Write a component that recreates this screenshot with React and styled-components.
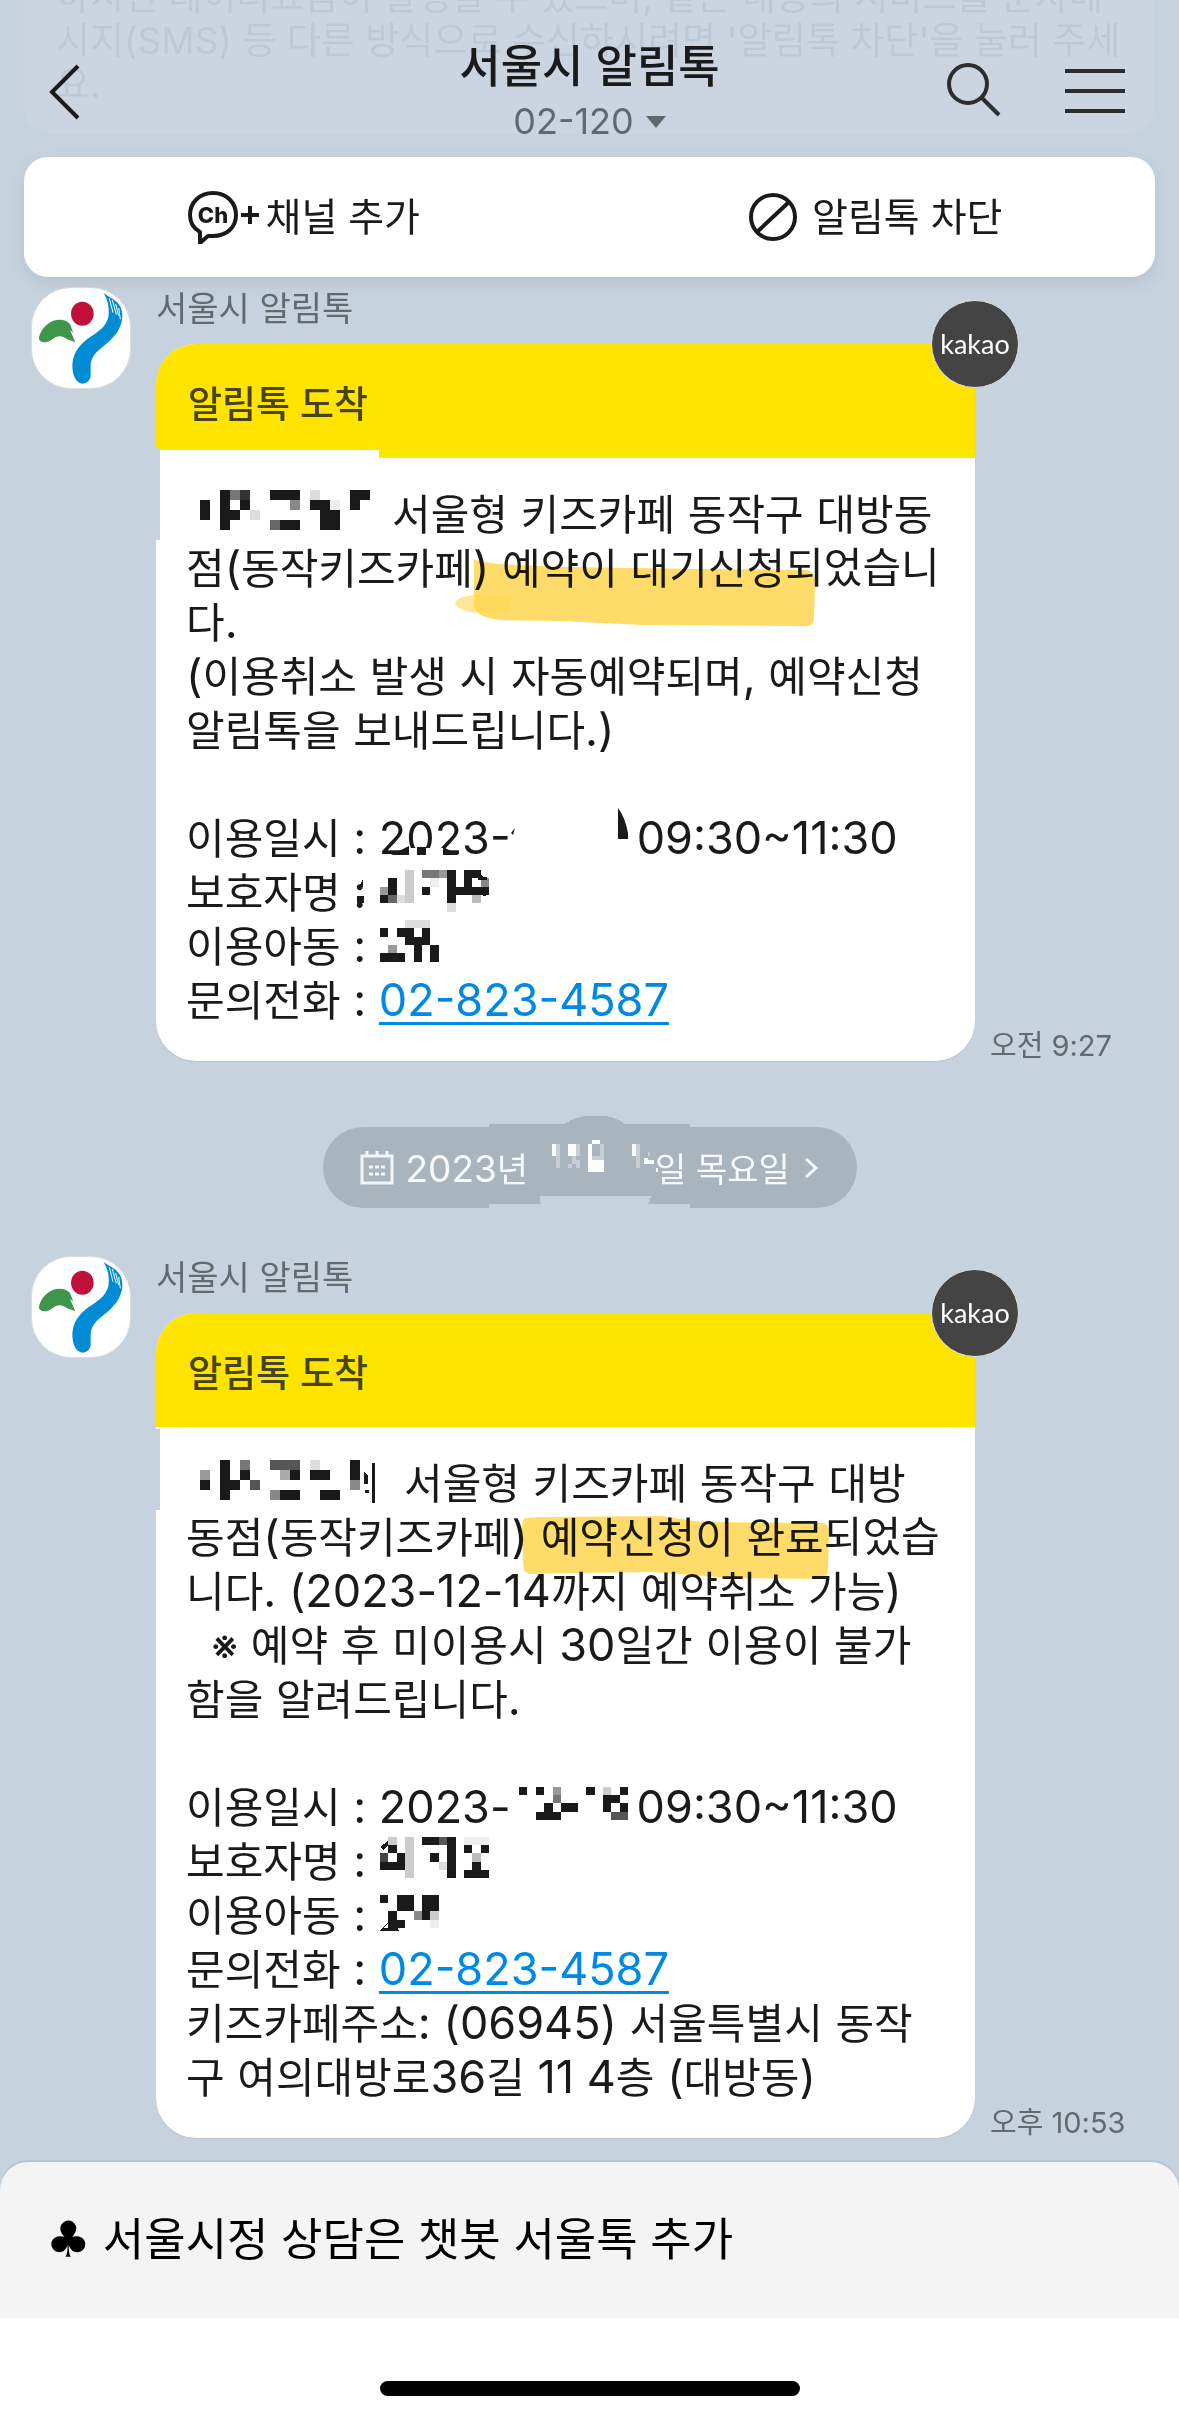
import React from "react";
import styled, { createGlobalStyle } from "styled-components";

const INK = "#1a1a1a";
const SKY = "#c6d3de";
const PILL = "#a8b4be";

const GlobalStyle = createGlobalStyle`
  * { box-sizing: border-box; }
  body {
    margin: 0;
    background: ${SKY};
    color: ${INK};
    font-family: Inter, "Noto Sans CJK KR", sans-serif;
  }
  button {
    border: 0;
    padding: 0;
    background: none;
    color: inherit;
    font: inherit;
    cursor: pointer;
  }
  svg { display: block; }
`;

const Screen = styled.div`
  position: relative;
  overflow: hidden;
  background: ${SKY};
`;

const PastNotice = styled.div`
  position: absolute;
  top: 0;
  left: 24px;
  right: 24px;
  height: 134px;
  padding: 0 32px 27px;
  overflow: hidden;
  border-radius: 0 0 28px 28px;
  background: #cad5e1;
  color: #bcc9d5;
  display: flex;
  flex-direction: column;
  justify-content: flex-end;
  font-size: 37px;
  line-height: 44px;
  white-space: nowrap;
`;

const Header = styled.header`
  position: relative;
  display: grid;
  grid-template-columns: 1fr auto 1fr;
  align-items: center;
  padding: 37px 49px 11px 49px;
`;

const Tools = styled.div`
  display: flex;
  align-items: center;
  justify-content: flex-end;
  gap: 62px;
`;

const IconButton = styled.button`
  justify-self: start;
`;

const TitleBlock = styled.div`
  display: flex;
  flex-direction: column;
  align-items: center;
`;

const Title = styled.h1`
  margin: 0;
  font-size: 45px;
  font-weight: 500;
  line-height: 60px;
`;

const SubTitle = styled.button`
  display: flex;
  align-items: center;
  gap: 12px;
  color: #61686e;
  font-size: 36px;
  line-height: 49px;
`;

const ActionCard = styled.nav`
  position: relative;
  display: grid;
  grid-template-columns: 1fr 1fr;
  gap: 12px;
  height: 120px;
  margin: 0 24px;
  border-radius: 24px;
  background: #fff;
  box-shadow: 0 6px 16px rgba(60, 80, 110, 0.12);
`;

const Action = styled.button`
  display: flex;
  align-items: center;
  justify-content: center;
  gap: ${(p) => p.$gap}px;
  font-size: 39px;
  line-height: 54px;
`;

const Chat = styled.main`
  padding: 10px 31px 24px;
`;

const Message = styled.article`
  display: flex;
  align-items: flex-start;
  gap: 25px;
`;

const Avatar = styled.div`
  flex: none;
  width: 100px;
  height: 102px;
  overflow: hidden;
  border: 1px solid #dcdcdc;
  border-radius: 40px;
  background: #fff;
`;

const Content = styled.div`
  flex: 1;
  min-width: 0;
`;

const Sender = styled.div`
  margin-bottom: 13px;
  color: #62696f;
  font-size: 34px;
  line-height: 44px;
`;

const BubbleRow = styled.div`
  display: flex;
  align-items: flex-end;
  gap: 15px;
`;

const Bubble = styled.div`
  position: relative;
  flex: 0 1 819px;
  border-radius: 40px;
  background: #fff;
  box-shadow: 0 1px 1px #b4c3d1;
`;

const BubbleHead = styled.div`
  display: flex;
  align-items: center;
  height: 114px;
  padding: 2px 32px 0;
  border-radius: 40px 0 0 0;
  background: #ffe400;
  color: #494413;
  font-size: 37px;
  font-weight: 500;
`;

const KakaoBadge = styled.div`
  position: absolute;
  top: -44px;
  right: -44px;
  display: flex;
  align-items: center;
  justify-content: center;
  width: 88px;
  height: 88px;
  padding-bottom: 2px;
  border: 1px solid #dde3e4;
  border-radius: 50%;
  background: #444;
  color: #fff;
  font-family: Lato, sans-serif;
  font-size: 27px;
`;

const BubbleBody = styled.div`
  position: relative;
  padding: 29px 0 34px 30px;
  font-size: 42px;
  line-height: 54px;
`;

const Line = styled.div`
  display: flex;
  align-items: flex-start;
  height: 54px;
  white-space: pre;
`;

const Wiped = styled.div`
  position: absolute;
  top: ${(p) => p.$top}px;
  left: ${(p) => p.$left}px;
  width: ${(p) => p.$width}px;
  height: ${(p) => p.$height}px;
  background: ${(p) => p.$color};
`;

const Hidden = styled.span`
  flex: none;
  width: ${(p) => p.$width}px;
  padding-top: ${(p) => p.$drop}px;
`;

const Marked = styled.mark`
  position: relative;
  background: none;
  color: inherit;
`;

const Latin = styled.span`
  font-size: 45px;
`;

const Over = styled.svg`
  position: absolute;
  overflow: visible;
  top: 0;
  left: 0;
`;

const Marker = styled(Over)`
  mix-blend-mode: multiply;
`;

const Phone = styled.a`
  color: #0089e3;
  text-decoration: underline;
  text-decoration-thickness: 3px;
  text-underline-offset: 6px;
  text-decoration-skip-ink: none;
`;

const Time = styled.time`
  flex: none;
  color: #62696f;
  font-size: 29px;
  line-height: 30px;
  white-space: nowrap;
`;

const DateButton = styled.button`
  position: relative;
  isolation: isolate;
  display: flex;
  align-items: center;
  width: 534px;
  height: 81px;
  margin: 66px auto 48px;
  padding: 0 37px;
  border-radius: 41px;
  background: ${PILL};
  color: #f8f9fa;
  font-size: 34px;
  white-space: pre;
`;

const DatePatch = styled.svg`
  position: absolute;
  z-index: -1;
  top: -11px;
  left: 166px;
`;

const DateText = styled.span`
  margin-left: ${(p) => p.$space}px;
`;

const DateYear = styled.span`
  font-size: 37px;
`;

const Chevron = styled.svg`
  margin-left: auto;
`;

const ChatbotBar = styled.button`
  display: flex;
  align-items: center;
  gap: 12px;
  width: 100%;
  height: 156px;
  padding: 0 46px;
  border-radius: 28px 28px 0 0;
  background: #f4f4f4;
  box-shadow: 0 -2px 1px #b3c3d3;
  color: #000;
  font-size: 45px;
  line-height: 60px;
`;

const Club = styled.span`
  font-family: "DejaVu Sans", sans-serif;
  font-size: 50px;
`;

const HomeArea = styled.footer`
  position: relative;
  display: flex;
  justify-content: center;
  height: 102px;
  padding-top: 63px;
  background: #fff;
`;

const HomeIndicator = styled.div`
  width: 420px;
  height: 15px;
  border-radius: 8px;
  background: #000;
`;

function Words({ children }) {
  return (
    <span>
      {children
        .split(/([\d():~,.\s-]+)/)
        .filter(Boolean)
        .map((part, i) => (/^[\d():~,.\s-]/.test(part) ? <Latin key={i}>{part}</Latin> : part))}
    </span>
  );
}

function Mosaic({ rows, w, h, x = 0, children }) {
  const width = x + w * Math.max(...rows.map((r) => r.length));
  const height = h * rows.length;
  return (
    <svg width={width} height={height} shapeRendering="crispEdges" overflow="visible" aria-hidden="true">
      {rows.flatMap((row, r) =>
        [...row].map((c, i) =>
          c === "." ? null : (
            <rect
              key={`${r}-${i}`}
              x={x + i * w}
              y={r * h}
              width={w}
              height={h}
              fill={c === "#" ? INK : `#${c}${c}${c}`}
            />
          )
        )
      )}
      {children}
    </svg>
  );
}

function SeoulAvatar() {
  return (
    <Avatar>
      <svg viewBox="24 24 294 300" width="98" height="100" role="img" aria-label="서울시">
        <ellipse cx="175" cy="101" rx="34" ry="36" fill="#c0103a" />
        <path
          d="M45 178C44 160 62 132 88 122C108 116 128 120 138 132L148 158L138 150L154 187L130 178C112 164 98 166 82 180C68 189 50 190 45 178Z"
          fill="#3d964b"
        />
        <path
          d="M238 38C252 50 272 56 284 72C297 88 298 115 290 135C278 170 248 190 222 212C205 228 199 245 200 262V288C198 302 188 311 175 311C156 309 145 287 145 255C147 222 162 198 190 177C220 157 245 143 253 112C257 85 252 60 238 38Z"
          fill="#008cd4"
        />
        <path d="M256 55L267 98M265 60L277 104M275 72L284 108M284 84L289 118" stroke="#fff" strokeWidth="3" />
      </svg>
    </Avatar>
  );
}

function Alimtalk({ time, children }) {
  return (
    <Message>
      <SeoulAvatar />
      <Content>
        <Sender>서울시 알림톡</Sender>
        <BubbleRow>
          <Bubble>
            <BubbleHead>알림톡 도착</BubbleHead>
            <BubbleBody>{children}</BubbleBody>
            <KakaoBadge>kakao</KakaoBadge>
          </Bubble>
          <Time>{time}</Time>
        </BubbleRow>
      </Content>
    </Message>
  );
}

export default function App() {
  return (
    <Screen>
      <GlobalStyle />
      <PastNotice>
        <span>하시면 데이터요금이 발생할 수 있으며, 같은 내용의 서비스를 문자메</span>
        <span>시지(SMS) 등 다른 방식으로 수신하시려면 '알림톡 차단'을 눌러 주세</span>
        <span>요.</span>
      </PastNotice>
      <Header>
        <IconButton aria-label="뒤로">
          <svg width="34" height="58" fill="none" stroke={INK} strokeWidth="4">
            <path d="M29 3L3 29L29 55" />
          </svg>
        </IconButton>
        <TitleBlock>
          <Title>서울시 알림톡</Title>
          <SubTitle>
            02-120
            <svg width="20" height="12">
              <path d="M0 0H20L10 12Z" fill="#61686e" />
            </svg>
          </SubTitle>
        </TitleBlock>
        <Tools>
          <IconButton aria-label="검색">
            <svg width="56" height="58" fill="none" stroke="#2b2d2f" strokeWidth="4">
              <circle cx="22" cy="21" r="19" />
              <path d="M36 35L53 52" />
            </svg>
          </IconButton>
          <IconButton aria-label="메뉴">
            <svg width="66" height="46" stroke="#2b2d2f" strokeWidth="4">
              <path d="M1 2H61M1 22H61M1 42H61" />
            </svg>
          </IconButton>
        </Tools>
      </Header>
      <ActionCard>
        <Action $gap={6}>
          <svg width="72" height="54" fill="none" stroke={INK} strokeWidth="4">
            <path
              d="M25 3C39 3 48 13 48 25C48 37 39 46 25 46H20L12 53V42C5 38 2 32 2 25C2 13 11 3 25 3Z"
              strokeLinejoin="round"
            />
            <path d="M53 25H71M62 16V34" />
            <text
              x="25"
              y="33"
              textAnchor="middle"
              fontFamily="Inter, sans-serif"
              fontSize="22"
              fontWeight="800"
              fill={INK}
              stroke="none"
            >
              Ch
            </text>
          </svg>
          채널 추가
        </Action>
        <Action $gap={14}>
          <svg width="50" height="50" fill="none" stroke={INK} strokeWidth="4">
            <circle cx="25" cy="25" r="22" />
            <path d="M41 10L9 40" />
          </svg>
          알림톡 차단
        </Action>
      </ActionCard>

      <Chat>
        <Alimtalk time="오전 9:27">
          <Wiped $top={-8} $left={4} $width={219} $height={8} $color="#fff" />
          <Wiped $top={-10} $left={0} $width={4} $height={92} $color={SKY} />
          <Line>
            <Hidden $width={206} $drop={3}>
              <Mosaic
                x={14}
                w={10}
                h={10}
                rows={["..#73..###.d...##", "#.#.#....8.##e.#f", "#.##.d......##", "..#....6##..##"]}
              />
            </Hidden>
            <Words>서울형 키즈카페 동작구 대방동</Words>
          </Line>
          <Line>
            <Words>점(동작키즈카페) </Words>
            <Marked>
              <Marker width="320" height="90">
                <path
                  d="M-28 19L-4 23L60 26L200 28L304 29Q312 30 313 38L312 78Q311 85 306 85L140 84L60 80L-2 79Q-24 77 -28 66Z"
                  fill="#ffdc69"
                />
                <path d="M-40 56Q-18 51 8 55Q11 64 6 71Q-16 73 -34 71Q-56 64 -40 56Z" fill="#ffd84f" opacity="0.6" />
              </Marker>
              <Words>예약이 대기신청</Words>
            </Marked>
            <Words>되었습니</Words>
          </Line>
          <Line>
            <Words>다.</Words>
          </Line>
          <Line>
            <Words>(이용취소 발생 시 자동예약되며, 예약신청</Words>
          </Line>
          <Line>
            <Words>알림톡을 보내드립니다.)</Words>
          </Line>
          <Line />
          <Line>
            <Words>이용일시 : </Words>
            <Marked>
              <Words>2023-</Words>
              <Over width="250" height="54">
                <path d="M30 37H64V46H30Z" fill="#fff" />
                <path d="M12 44L30 35V44ZM38 36H47V44H38ZM64 36L80 44H64Z" fill={INK} />
                <path d="M132 22L136 17L134 24ZM239 -3Q246 6 249 22V28H239Z" fill={INK} />
              </Over>
            </Marked>
            <Hidden $width={126} $drop={0} />
            <Words>09:30~11:30</Words>
          </Line>
          <Line>
            <Words>보호자명 :</Words>
            <Hidden $width={120} $drop={5}>
              <Mosaic x={14} w={8.4} h={8.3} rows={["...c.779#.##", ".#.c..e.#.#.8", "9#.c.#f.#####", "#6dc....#..b", "...f....d"]}>
                <path d="M-3 9V17L-7 17ZM-9 26H-2V33H-9ZM112 0L117 7H121V10H112ZM118 18L120 26H117Z" fill={INK} />
              </Mosaic>
            </Hidden>
          </Line>
          <Line>
            <Words>이용아동 :</Words>
            <Hidden $width={120} $drop={1}>
              <Mosaic x={14} w={8.4} h={8.3} rows={["...ddd", "#.##.#", "...###", ".9..#f#", "###.#.#"]} />
            </Hidden>
          </Line>
          <Line>
            <Words>문의전화 : </Words>
            <Phone href="tel:02-823-4587">
              <Words>02-823-4587</Words>
            </Phone>
          </Line>
        </Alimtalk>

        <DateButton>
          <DatePatch width="201" height="93" shapeRendering="crispEdges" aria-hidden="true">
            <path d="M0 8H75Q88 0 100 0H112Q126 0 136 8H201V88H0Z" fill={PILL} />
            <path d="M0 88H52Q50 84 51 80H162Q161 84 159 88H201V93H0Z" fill={SKY} />
            <path
              d="M63 28H67V40H63ZM79 28H87V40H79ZM103 24H111V28H103ZM99 28H103V44H99ZM99 44H115V56H99ZM143 28H147V40H143ZM155 42H159V48H155ZM159 44H165V48H159ZM167 52H169V56H167Z"
              fill="#fbfcfc"
            />
            <path
              d="M67 28H71V52H67ZM87 28H91V40H87ZM83 40H87V48H83ZM87 44H91V52H87ZM79 48H83V52H79ZM111 28H115V44H111ZM103 40H111V44H103ZM147 28H151V52H147ZM159 36H161V40H159Z"
              fill="#c6ced6"
            />
          </DatePatch>
          <svg width="34" height="34" fill="none" stroke="#f2f4f5" strokeWidth="3" aria-hidden="true">
            <path d="M2 5H32V32H2Z" />
            <path d="M7 0V5M17 0V5M27 0V5" />
            <path d="M9 16H25M9 23H25" strokeDasharray="4 2" />
          </svg>
          <DateText $space={12}>
            <DateYear>2023</DateYear>년
          </DateText>
          <DateText $space={127}>일 목요일</DateText>
          <Chevron width="16" height="22" fill="none" stroke="#f8f9fa" strokeWidth="3" aria-hidden="true">
            <path d="M2 2L12 11L2 20" />
          </Chevron>
        </DateButton>

        <Alimtalk time="오후 10:53">
          <Wiped $top={2} $left={0} $width={4} $height={81} $color={SKY} />
          <Line>
            <Hidden $width={218} $drop={4}>
              <Mosaic
                x={14}
                w={10}
                h={10}
                rows={["..#.7..555.d...#", "9.#.#...a#.##..#", "#.##.5.........8", "..#....8##..##"]}
              >
                <path d="M186 3H189V43H186ZM178 12L182 16V24H178ZM179 30H183V33H179Z" fill={INK} />
              </Mosaic>
            </Hidden>
            <Words>서울형 키즈카페 동작구 대방</Words>
          </Line>
          <Line>
            <Words>동점(동작키즈카페) </Words>
            <Marked>
              <Marker width="300" height="70">
                <path
                  d="M-16 8L0 7L120 6L160 12L282 13Q289 15 288 24L287 60Q286 69 280 69L190 68L110 62L30 63L-12 64Q-19 62 -18 50L-19 20Q-19 10 -16 8Z"
                  fill="#ffdc69"
                />
              </Marker>
              <Words>예약신청이 완료</Words>
            </Marked>
            <Words>되었습</Words>
          </Line>
          <Line>
            <Words>니다. (2023-12-14까지 예약취소 가능)</Words>
          </Line>
          <Line>
            <Words>{"  ※ 예약 후 미이용시 30일간 이용이 불가"}</Words>
          </Line>
          <Line>
            <Words>함을 알려드립니다.</Words>
          </Line>
          <Line />
          <Line>
            <Words>이용일시 : 2023-</Words>
            <Hidden $width={126} $drop={7}>
              <Mosaic x={8} w={8.4} h={8.2} rows={["#.#.9...#.c.#", "....7.....##", "...#.##...#.#", "..###......55"]} />
            </Hidden>
            <Words>09:30~11:30</Words>
          </Line>
          <Line>
            <Words>보호자명 :</Words>
            <Hidden $width={120} $drop={3}>
              <Mosaic x={14} w={8.4} h={8.2} rows={[".c.c.##5#.eee", ".#.c....#.#.#", "4.#c..#.#..b", "###c...d#..#", "...c....#.###"]}>
                <path d="M14 10L22 4V8L17 13Z" fill={INK} />
              </Mosaic>
            </Hidden>
          </Line>
          <Line>
            <Words>이용아동 :</Words>
            <Hidden $width={120} $drop={7}>
              <Mosaic x={14} w={8.4} h={8.2} rows={["#.##.##", "..##.##", ".#..8#c", ".##...e"]}>
                <path d="M13 36L26 24L33 36ZM18 33H24L22 28Z" fill={INK} fillRule="evenodd" />
              </Mosaic>
            </Hidden>
          </Line>
          <Line>
            <Words>문의전화 : </Words>
            <Phone href="tel:02-823-4587">
              <Words>02-823-4587</Words>
            </Phone>
          </Line>
          <Line>
            <Words>키즈카페주소: (06945) 서울특별시 동작</Words>
          </Line>
          <Line>
            <Words>구 여의대방로36길 11 4층 (대방동)</Words>
          </Line>
        </Alimtalk>
      </Chat>

      <ChatbotBar>
        <Club aria-hidden="true">♣</Club>
        서울시정 상담은 챗봇 서울톡 추가
      </ChatbotBar>
      <HomeArea>
        <HomeIndicator />
      </HomeArea>
    </Screen>
  );
}
